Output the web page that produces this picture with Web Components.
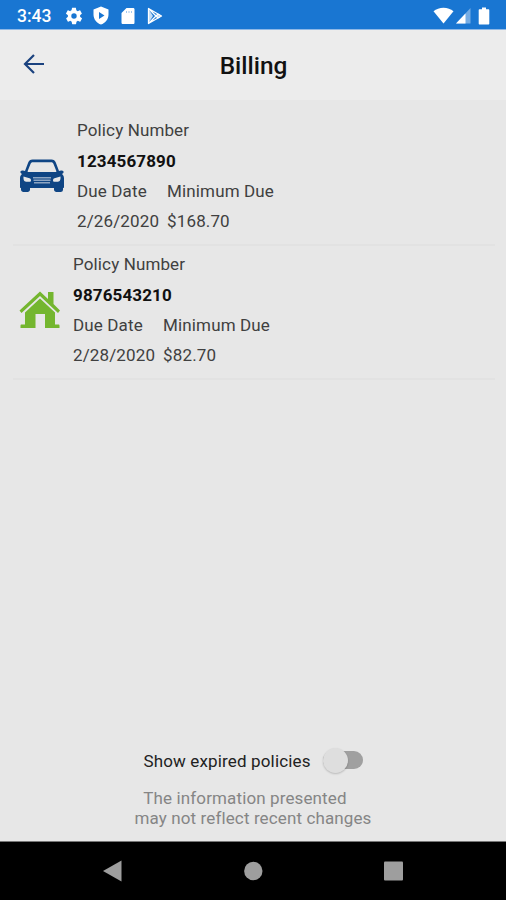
<!DOCTYPE html>
<html lang="en">
<head>
  <meta charset="UTF-8">
  <meta name="viewport" content="width=device-width, initial-scale=1.0">
  <title>Billing</title>
  <style>
    body {
      margin: 0;
      font-family: Roboto, sans-serif;
    }
  </style>
</head>
<body>
  <billing-page></billing-page>

  <script>
    class StatusBar extends HTMLElement {
      constructor () {
        super()
        this.shadow = this.attachShadow({ mode: 'open' })
      }

      connectedCallback () {
        this.render()
      }

      render () {
        this.shadow.innerHTML =
          /*html*/`
            <style>
              :host {
                align-items: center;
                background-color: #1976d2;
                border-bottom: 1px solid #8fb8e6;
                box-sizing: border-box;
                color: white;
                display: flex;
                height: 30px;
                justify-content: space-between;
                padding: 2px 14px 0 17px;
              }

              div {
                align-items: center;
                display: flex;
              }

              span {
                font-size: 17.5px;
                font-weight: 500;
                width: 35px;
              }

              svg {
                display: block;
                fill: white;
              }

              .notifications {
                gap: 9px;
              }

              .notifications span {
                margin-right: 4px;
              }
            </style>

            <div class="notifications">
              <span>3:43</span>
              <svg width="18" height="18" viewBox="1 1 22 22"><path d="M19.4 13c.1-.3.1-.7.1-1s0-.7-.1-1l2.1-1.6c.2-.2.2-.4.1-.6l-2-3.5c-.1-.2-.4-.3-.6-.2l-2.5 1c-.5-.4-1.1-.7-1.7-1l-.4-2.6c0-.3-.2-.5-.4-.5h-4c-.2 0-.4.2-.5.4L9 5.1c-.6.2-1.1.6-1.7 1l-2.5-1c-.2-.1-.5 0-.6.2l-2 3.5c-.1.2-.1.4.1.6L4.6 11c0 .3-.1.7-.1 1s0 .7.1 1l-2.1 1.6c-.2.2-.2.4-.1.6l2 3.5c.1.2.4.3.6.2l2.5-1c.5.4 1.1.7 1.7 1l.4 2.6c0 .3.2.5.5.5h4c.2 0 .5-.2.5-.4l.4-2.7c.6-.2 1.1-.6 1.7-1l2.5 1c.2.1.5 0 .6-.2l2-3.5c.1-.2.1-.4-.1-.6zM12 15.3a3.3 3.3 0 1 1 0-6.6 3.3 3.3 0 0 1 0 6.6z"/></svg>
              <svg width="18" height="19" viewBox="0 0 18 19"><path fill-rule="evenodd" d="M9 .5l7.5 3v5c0 4.700-3.200 8.700-7.500 10-4.300-1.300-7.500-5.300-7.500-10v-5zM7 6v7l5.500-3.500z"/></svg>
              <svg width="18" height="18" viewBox="0 0 18 18"><path d="M7.5 1H14c1 0 1.5.5 1.5 1.5v13c0 1-.5 1.500-1.500 1.500H4c-1 0-1.500-.5-1.500-1.500V6z"/><path fill="#1976d2" fill-opacity=".4" d="M7 4h1v2H7zM9.500 4h1v2h-1zM12 4h1v2h-1z"/></svg>
              <svg width="18" height="18" viewBox="0 0 18 18"><path fill="none" stroke="white" stroke-width="1.3" stroke-linejoin="round" d="M2.500 1.500v15l13-7.500zM2.500 1.500L12 11M2.500 16.500L12 7"/><path d="M2.500 2L7 9l-4.500 7zM10 9l2.500-2.500L15.500 9l-3 2.500z" fill-opacity=".75"/></svg>
            </div>

            <div>
              <svg width="21" height="17" viewBox="0 0 21 17"><path d="M10.5 16.5L.5 4.300C3.200 2 6.700.8 10.500.8s7.300 1.200 10 3.500z"/></svg>
              <svg width="17" height="17" viewBox="0 0 17 17"><path d="M16.5 1v15.500H2z" fill-opacity=".4"/><path d="M11.500 6.400v10.100H2z"/></svg>
              <svg width="16" height="18" viewBox="0 0 16 18" style="margin-left: 5px"><path d="M6 .5h4v1.700h2.300c.6 0 1 .4 1 1V16.500c0 .6-.4 1-1 1H3.700c-.6 0-1-.4-1-1V3.200c0-.6.4-1 1-1H6z"/></svg>
            </div>
          `
      }
    }

    customElements.define('status-bar', StatusBar)

    class PageHeader extends HTMLElement {
      constructor () {
        super()
        this.shadow = this.attachShadow({ mode: 'open' })
      }

      connectedCallback () {
        this.render()
      }

      render () {
        this.shadow.innerHTML =
          /*html*/`
            <style>
              :host {
                align-items: center;
                background-color: #ececec;
                box-sizing: border-box;
                display: grid;
                grid-template-columns: 60px 1fr 60px;
                height: 70px;
                padding: 0 0 1px 1px;
              }

              button {
                background: none;
                border: none;
                padding: 0 0 1px 22px;
              }

              svg {
                display: block;
              }

              h1 {
                color: #111;
                font-size: 24.4px;
                font-weight: 500;
                margin: 0;
                padding-top: 2px;
                text-align: center;
              }
            </style>

            <button aria-label="Back">
              <svg width="22" height="20" viewBox="0 0 22 20" fill="none" stroke="#1b427f" stroke-width="2.2"><path d="M11 1L2 10l9 9M2 10h19"/></svg>
            </button>
            <h1><slot></slot></h1>
          `
      }
    }

    customElements.define('page-header', PageHeader)

    class PolicyList extends HTMLElement {
      constructor () {
        super()
        this.shadow = this.attachShadow({ mode: 'open' })
        this.data = []
      }

      connectedCallback () {
        this.loadData()
        this.render()
      }

      loadData () {
        this.data = [
          {
            "type": "car",
            "number": "1234567890",
            "dueDate": "2/26/2020",
            "minimumDue": "$168.70"
          },
          {
            "type": "home",
            "number": "9876543210",
            "dueDate": "2/28/2020",
            "minimumDue": "$82.70"
          }
        ]

        this.icons = {
          car: `<svg width="46" height="34" viewBox="0 0 46 34"><path fill="#0f4584" fill-rule="evenodd" d="M13.500.5h19c2.200 0 3.500 1 4.300 3l3.200 8.500 2-.5c2-.3 3.300 1 2.300 2.500l-1.300 1c1.500 1.300 2 2.500 2 4.500v8.500c0 .8-.3 1-1 1v1.500c0 1.700-1 2.500-2.500 2.500h-4c-1.500 0-2.500-1-2.500-2.500V29H11v1.500c0 1.500-1 2.500-2.500 2.500h-4C3 33 2 32 2 30.500V29c-.7 0-1-.3-1-1v-8.500c0-2 .5-3.200 2-4.500l-1.300-1c-1-1.500.3-2.800 2.300-2.500l2 .5 3.200-8.500c.8-2 2.100-3 4.300-3zM14 3.300c-1.500 0-2 .5-2.500 1.800L8.700 12c-.2.600 0 1 .8 1h27c.8 0 1-.4.8-1l-2.800-6.900c-.5-1.300-1-1.800-2.500-1.800z"/><path fill="#e7e7e7" d="M4.500 17.500l6 1.700c1 .3 1.500 1.200 1.500 2.300 0 1-.5 1.300-1.500 1.300H8c-2.500 0-3.800-1.300-3.500-5.300zM41.500 17.500l-6 1.700c-1 .3-1.500 1.200-1.500 2.300 0 1 .5 1.300 1.500 1.300H38c2.500 0 3.800-1.300 3.500-5.300z"/><path fill="#8da5c2" d="M14 18h18v1.500H14zM14.500 20.500h17V22h-17zM15 23h16v1.500H15z"/></svg>`,
          home: `<svg width="42" height="38" viewBox="0 0 42 38"><path fill="#74b62f" d="M.5 19.500L21 .5l8 7.500V1h5.500v12l6.500 6.500-2 2.500-18-17L2.500 22z"/><path fill="#74b62f" d="M6 21.500l15-14 15 14v12h3.500c.6 0 1 .5 1 1.200V37H26V23H16.500v14H1.500v-2.300c0-.7.4-1.200 1-1.200H6z"/></svg>`
        }
      }

      render () {
        this.shadow.innerHTML =
          /*html*/`
            <style>
              :host {
                display: block;
                padding: 12px 11px 0 13px;
              }

              .policy {
                align-items: center;
                border-bottom: 2px solid #e2e2e2;
                box-sizing: border-box;
                color: #404040;
                display: flex;
                font-size: 17px;
                height: 134px;
                letter-spacing: 0.13px;
                line-height: 30.4px;
              }

              .icon {
                padding: 0 12.5px 5px 5.5px;
              }

              .icon svg {
                display: block;
              }

              .details {
                display: grid;
                grid-template-columns: max-content max-content;
                column-gap: 8px;
                padding-bottom: 4px;
              }

              .label, .number {
                grid-column: 1 / -1;
              }

              .number {
                color: #111;
                font-weight: 700;
              }
            </style>

            <section class="policies"></section>
          `

        const policies = this.shadow.querySelector('.policies')

        this.data.forEach(policy => {
          const policyContainer = document.createElement('div')
          policyContainer.classList.add('policy')
          policies.appendChild(policyContainer)

          const policyIcon = document.createElement('div')
          policyIcon.classList.add('icon')
          policyIcon.innerHTML = this.icons[policy.type]
          policyContainer.appendChild(policyIcon)

          const details = document.createElement('div')
          details.classList.add('details')
          policyContainer.appendChild(details)

          const label = document.createElement('span')
          label.classList.add('label')
          label.textContent = 'Policy Number'
          details.appendChild(label)

          const number = document.createElement('span')
          number.classList.add('number')
          number.textContent = policy.number
          details.appendChild(number)

          const cells = ['Due Date', 'Minimum Due', policy.dueDate, policy.minimumDue]

          cells.forEach(cell => {
            const text = document.createElement('span')
            text.textContent = cell
            details.appendChild(text)
          })
        })
      }
    }

    customElements.define('policy-list', PolicyList)

    class ToggleSwitch extends HTMLElement {
      constructor () {
        super()
        this.shadow = this.attachShadow({ mode: 'open' })
      }

      connectedCallback () {
        this.render()
      }

      render () {
        this.shadow.innerHTML =
          /*html*/`
            <style>
              :host {
                align-items: center;
                color: #222;
                display: flex;
                font-size: 17px;
                gap: 12px;
                letter-spacing: 0.15px;
              }

              .track {
                background-color: #a0a0a0;
                border-radius: 9px;
                display: flex;
                align-items: center;
                height: 18px;
                margin-bottom: 2px;
                width: 40px;
              }

              .thumb {
                background-color: #dedede;
                border-radius: 50%;
                box-shadow: 0 1px 2px rgba(0, 0, 0, 0.2);
                flex: none;
                height: 25px;
                width: 25px;
              }
            </style>

            <slot></slot>
            <div class="track"><div class="thumb"></div></div>
          `
      }
    }

    customElements.define('toggle-switch', ToggleSwitch)

    class NavigationBar extends HTMLElement {
      constructor () {
        super()
        this.shadow = this.attachShadow({ mode: 'open' })
      }

      connectedCallback () {
        this.render()
      }

      render () {
        this.shadow.innerHTML =
          /*html*/`
            <style>
              :host {
                align-items: center;
                background-color: black;
                border-top: 1px solid #777;
                box-sizing: border-box;
                display: flex;
                height: 59px;
                justify-content: center;
                gap: 120px;
              }

              svg {
                display: block;
                fill: #9e9e9e;
              }
            </style>

            <svg width="20" height="22" viewBox="0 0 20 22"><path d="M0 11L18.5.5v21z"/></svg>
            <svg width="20" height="20" viewBox="0 0 20 20"><circle cx="10.3" cy="10" r="9.2"/></svg>
            <svg width="20" height="20" viewBox="0 0 20 20"><rect x="1" y=".5" width="19" height="19" rx="1"/></svg>
          `
      }
    }

    customElements.define('navigation-bar', NavigationBar)

    class BillingPage extends HTMLElement {
      constructor () {
        super()
        this.shadow = this.attachShadow({ mode: 'open' })
      }

      connectedCallback () {
        this.render()
      }

      render () {
        this.shadow.innerHTML =
          /*html*/`
            <style>
              :host {
                background-color: #e7e7e7;
                display: flex;
                flex-direction: column;
                height: 900px;
              }

              policy-list {
                flex: 1;
              }

              footer {
                align-items: center;
                display: flex;
                flex-direction: column;
                gap: 17px;
                padding-bottom: 13px;
              }

              p {
                color: #858585;
                font-size: 17px;
                letter-spacing: 0.12px;
                line-height: 20px;
                margin: 0;
                text-align: center;
              }

              .first {
                display: block;
                padding-right: 16px;
              }
            </style>

            <status-bar></status-bar>
            <page-header>Billing</page-header>
            <policy-list></policy-list>
            <footer>
              <toggle-switch>Show expired policies</toggle-switch>
              <p><span class="first">The information presented</span>may not reflect recent changes</p>
            </footer>
            <navigation-bar></navigation-bar>
          `
      }
    }

    customElements.define('billing-page', BillingPage)
  </script>
</body>
</html>
